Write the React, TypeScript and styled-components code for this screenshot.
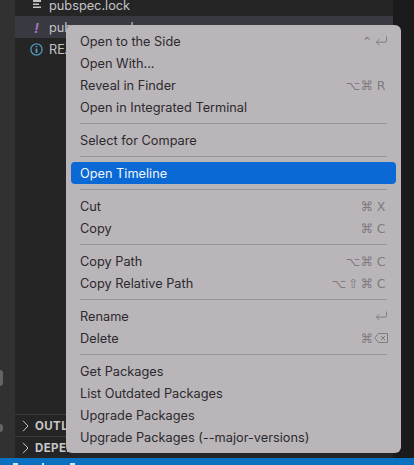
import React from "react";
import styled, { createGlobalStyle } from "styled-components";

const Global = createGlobalStyle`
  html, body { margin: 0; padding: 0; background: #1c1c1d; }
  #root { width: 414px; height: 465px; overflow: hidden; }
`;

const Screen = styled.div`
  position: relative;
  width: 414px;
  height: 465px;
  display: flex;
  flex-direction: column;
  overflow: hidden;
  font-family: Inter, "Liberation Sans", sans-serif;
`;

const Workspace = styled.div`
  flex: 1;
  min-height: 0;
  display: flex;
`;

const ActivityBar = styled.div`
  width: 15px;
  flex: none;
  background: #313132;
  display: flex;
  flex-direction: column;
  justify-content: flex-end;
  align-items: flex-start;
  gap: 38px;
  padding-bottom: 26px;
`;

const ActivityDot = styled.div<{ $h: number }>`
  width: 3px;
  height: ${(p) => p.$h}px;
  border-radius: 0 3px 3px 0;
  background: #646466;
`;

const SideBar = styled.div`
  width: 378px;
  flex: none;
  background: #252526;
  display: flex;
  flex-direction: column;
`;

const EditorEdge = styled.div`
  flex: 1;
  background: #1b1b1c;
`;

const FileList = styled.div`
  flex: 1;
  margin-top: -6px;
`;

const FileRow = styled.div<{ $active?: boolean }>`
  height: 22px;
  display: flex;
  align-items: center;
  padding-left: 14px;
  gap: 5px;
  background: ${(p) => (p.$active ? "#393942" : "transparent")};
  color: #c4c4c6;
  font-size: 12.75px;
`;

const FileIcon = styled.span`
  width: 15px;
  display: flex;
  justify-content: center;
  flex: none;
`;

const Bang = styled.span`
  color: #a074c4;
  font: italic 700 15px "Liberation Sans", sans-serif;
`;

const Section = styled.div`
  height: 22px;
  flex: none;
  border-top: 1px solid #3c3c3e;
  box-sizing: border-box;
  display: flex;
  align-items: center;
  padding-left: 7px;
  gap: 6px;
  color: #c8c8ca;
  font-size: 11.5px;
  font-weight: 700;
  letter-spacing: 0.4px;
`;

const StatusBar = styled.div`
  height: 7px;
  background: #0a70c0;
  flex: none;
  display: flex;
  align-items: flex-end;
  padding-left: 13px;
`;

const StatusMark = styled.span<{ $w: number; $gap: number }>`
  width: ${(p) => p.$w}px;
  height: 2px;
  margin-right: ${(p) => p.$gap}px;
  background: #cfe4f5;
`;

const Menu = styled.div`
  position: absolute;
  left: 66px;
  top: 25px;
  width: 335px;
  height: 428px;
  box-sizing: border-box;
  padding: 5px;
  background: #bab5b9;
  border-radius: 6px;
  display: flex;
  flex-direction: column;
  color: #2b2a2e;
  font-size: 12.75px;
`;

const Item = styled.div<{ $selected?: boolean }>`
  height: 22px;
  flex: none;
  display: flex;
  align-items: center;
  justify-content: space-between;
  padding: 0 8px 0 9px;
  border-radius: 4px;
  background: ${(p) => (p.$selected ? "#0a69d4" : "transparent")};
  color: ${(p) => (p.$selected ? "#f4f6fb" : "inherit")};
`;

const Separator = styled.div`
  height: 1px;
  flex: none;
  margin: 5px 9px;
  background: #99959a;
`;

const Keys = styled.span`
  display: flex;
  align-items: center;
  color: #7f7b80;
`;

const KeyCap = styled.span`
  width: 14px;
  display: flex;
  justify-content: center;
  align-items: center;
  font: 12.5px "DejaVu Sans", sans-serif;
`;

const Chevron = () => (
  <svg width="7" height="12" viewBox="0 0 7 12" fill="none" stroke="#c4c4c6" strokeWidth="1">
    <path d="M1 .800l5 5.200-5 5.200" />
  </svg>
);

const LockIcon = () => (
  <svg width="10" height="10" viewBox="0 0 10 10" fill="#c4c4c6">
    <path d="M1 0h8v2H1zM1 3.500h6v1.500H1zM1 6.500h8v1.500H1z" />
  </svg>
);

const InfoIcon = () => (
  <svg width="13" height="13" viewBox="0 0 13 13" fill="none" stroke="#519aba" strokeWidth="1.300">
    <circle cx="6.500" cy="6.500" r="5.600" />
    <path d="M6.500 5.500v4.500M6.500 3v1.300" strokeWidth="1.800" />
  </svg>
);

const ReturnIcon = () => (
  <svg width="13" height="10" viewBox="0 0 13 10" fill="none" stroke="#7f7b80" strokeWidth="1">
    <path d="M11.500 .500v4.200a1.500 1.500 0 0 1-1.500 1.500H1.500M4.300 3.300L1.300 6.200l3 3" />
  </svg>
);

const DeleteIcon = () => (
  <svg width="14" height="10" viewBox="0 0 14 10" fill="none" stroke="#7f7b80" strokeWidth="1">
    <path d="M4.500.500h9v9h-9L.700 5zM7 3l4 4M11 3L7 7" />
  </svg>
);

type Key = string | React.ReactNode;
type Entry = { label: string; keys?: Key[]; selected?: boolean };

const groups: Entry[][] = [
  [
    { label: "Open to the Side", keys: ["⌃", <ReturnIcon />] },
    { label: "Open With..." },
    { label: "Reveal in Finder", keys: ["⌥", "⌘", "R"] },
    { label: "Open in Integrated Terminal" },
  ],
  [{ label: "Select for Compare" }],
  [{ label: "Open Timeline", selected: true }],
  [
    { label: "Cut", keys: ["⌘", "X"] },
    { label: "Copy", keys: ["⌘", "C"] },
  ],
  [
    { label: "Copy Path", keys: ["⌥", "⌘", "C"] },
    { label: "Copy Relative Path", keys: ["⌥", "⇧", "⌘", "C"] },
  ],
  [
    { label: "Rename", keys: [<ReturnIcon />] },
    { label: "Delete", keys: ["⌘", <DeleteIcon />] },
  ],
  [
    { label: "Get Packages" },
    { label: "List Outdated Packages" },
    { label: "Upgrade Packages" },
    { label: "Upgrade Packages (--major-versions)" },
  ],
];

export default function App() {
  return (
    <Screen>
      <Global />
      <Workspace>
        <ActivityBar>
          <ActivityDot $h={16} />
          <ActivityDot $h={8} />
        </ActivityBar>
        <SideBar>
          <FileList>
            <FileRow>
              <FileIcon><LockIcon /></FileIcon>
              pubspec.lock
            </FileRow>
            <FileRow $active>
              <FileIcon><Bang>!</Bang></FileIcon>
              pubspec.yaml
            </FileRow>
            <FileRow>
              <FileIcon><InfoIcon /></FileIcon>
              README.md
            </FileRow>
          </FileList>
          <Section><Chevron />OUTLINE</Section>
          <Section><Chevron />DEPENDENCIES</Section>
        </SideBar>
        <EditorEdge />
      </Workspace>
      <StatusBar>
        <StatusMark $w={5} $gap={24} />
        <StatusMark $w={2} $gap={26} />
        <StatusMark $w={5} $gap={0} />
      </StatusBar>
      <Menu>
        {groups.map((group, i) => (
          <React.Fragment key={i}>
            {i > 0 && <Separator />}
            {group.map((item) => (
              <Item key={item.label} $selected={item.selected}>
                {item.label}
                {item.keys && (
                  <Keys>
                    {item.keys.map((k, j) => (
                      <KeyCap key={j}>{k}</KeyCap>
                    ))}
                  </Keys>
                )}
              </Item>
            ))}
          </React.Fragment>
        ))}
      </Menu>
    </Screen>
  );
}
